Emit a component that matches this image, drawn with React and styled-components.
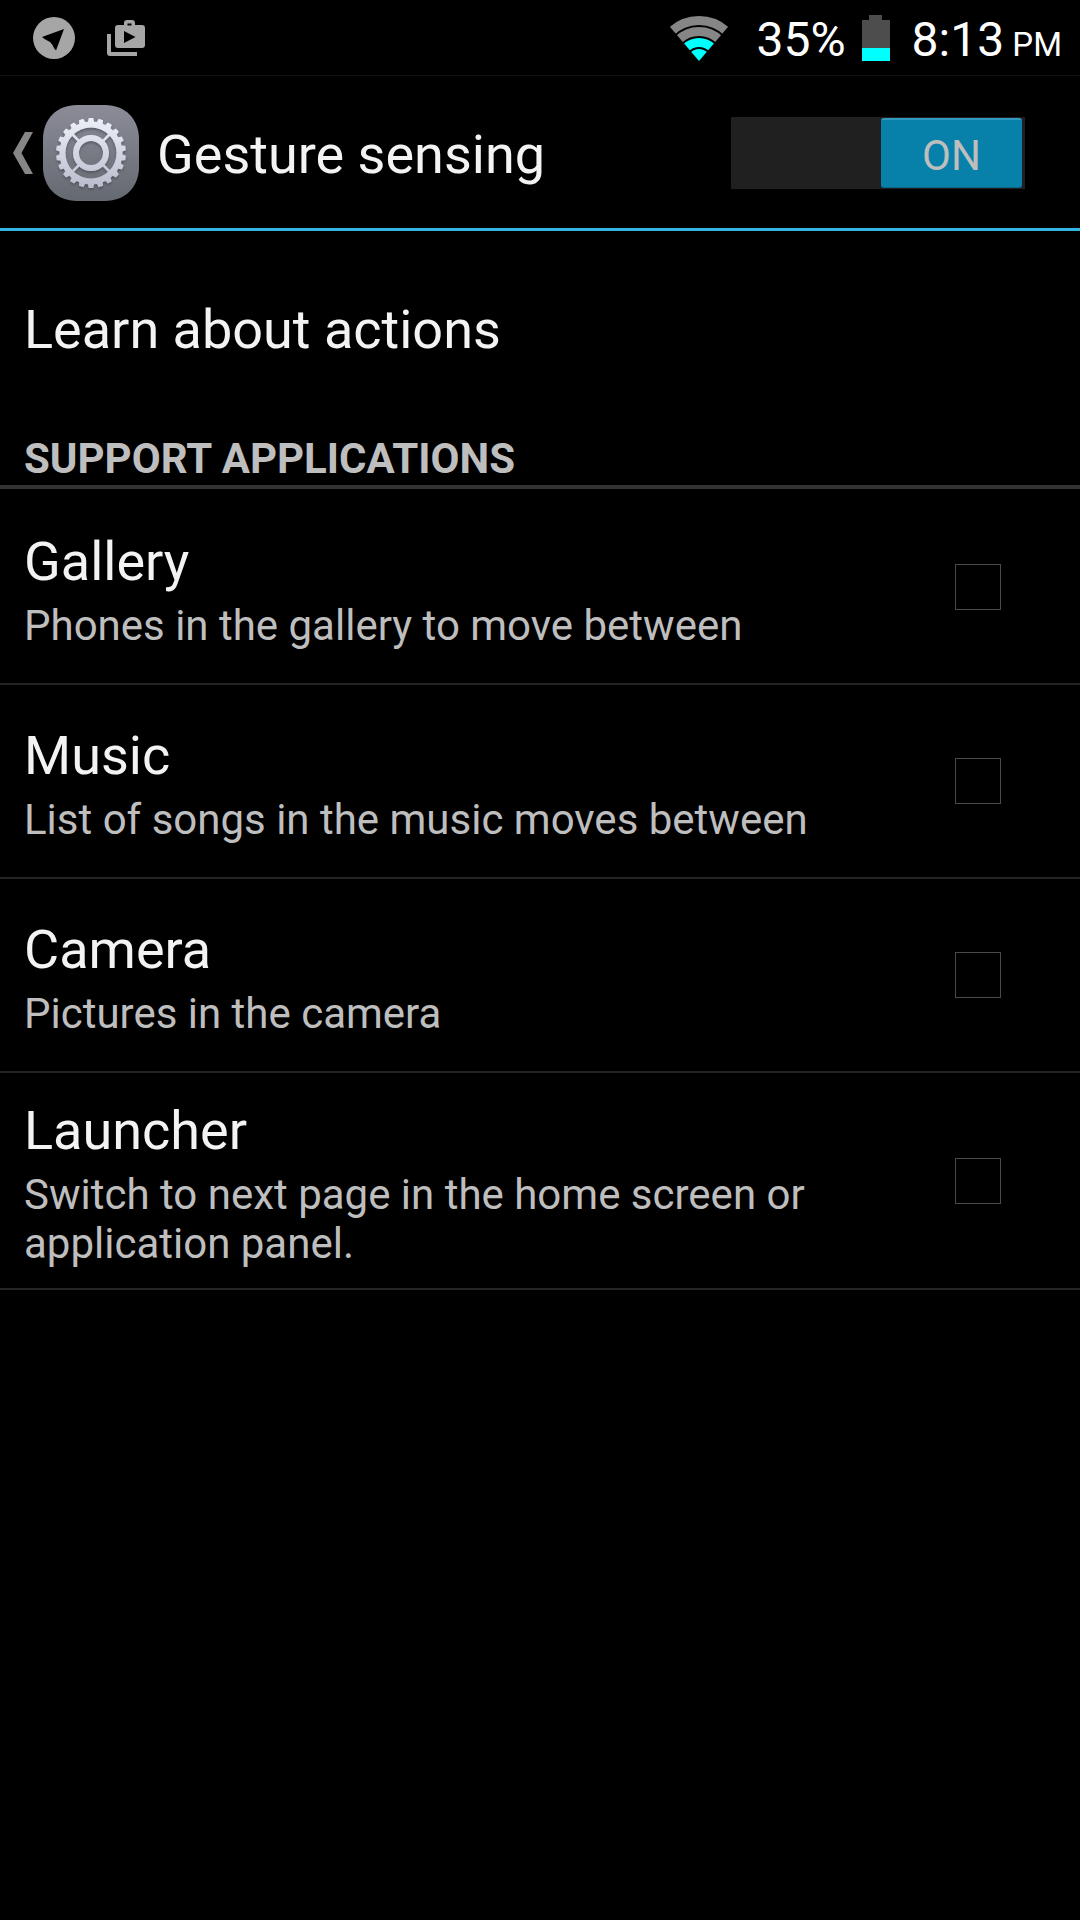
import { useState } from "react";
import styled, { createGlobalStyle } from "styled-components";

const APPS = [
  { id: "gallery", name: "Gallery", text: "Phones in the gallery to move between" },
  { id: "music", name: "Music", text: "List of songs in the music moves between" },
  { id: "camera", name: "Camera", text: "Pictures in the camera" },
  {
    id: "launcher",
    name: "Launcher",
    text: "Switch to next page in the home screen or application panel.",
  },
];

// gear outline, teeth are trapezoids between the two radii
function gearPath(teeth, inner, outer) {
  const step = (Math.PI * 2) / teeth;
  const point = (r, a) =>
    `${(48 + r * Math.sin(a)).toFixed(2)} ${(48 - r * Math.cos(a)).toFixed(2)}`;
  const points = [];
  for (let i = 0; i < teeth; i++) {
    const a = i * step;
    points.push(point(inner, a - step * 0.34));
    points.push(point(outer, a - step * 0.23));
    points.push(point(outer, a + step * 0.23));
    points.push(point(inner, a + step * 0.34));
  }
  return `M${points.join("L")}Z`;
}

function TelegramIcon() {
  return (
    <svg width="42" height="42" viewBox="0 0 42 42" aria-hidden="true">
      <circle cx="21" cy="21" r="21" fill="#a6a6a6" />
      <path d="M9 20 31 12 23 33.5Q21 32 19.500 28L17 25Q11 22 9 20Z" fill="#000" />
    </svg>
  );
}

function PlayIcon() {
  return (
    <svg width="38" height="36" viewBox="0 0 38 36" aria-hidden="true">
      <path d="M0 14H4V32H30V36H3Q0 36 0 33Z" fill="#a6a6a6" />
      <path
        fillRule="evenodd"
        fill="#a6a6a6"
        d="M11 5H17V3Q17 0 20 0H25Q28 0 28 3V5H35Q38 5 38 8V25Q38 28 35 28H11Q8 28 8 25V8Q8 5 11 5ZM20.5 3.5V5.5H24.5V3.5ZM17 11V23L28.5 17Z"
      />
    </svg>
  );
}

function WifiIcon() {
  return (
    <svg width="60" height="46" viewBox="0 0 60 46" aria-hidden="true">
      <clipPath id="wifi">
        <path d="M30 46-4 6V-10H64V6Z" />
      </clipPath>
      <g fill="none" clipPath="url(#wifi)">
        <circle cx="30" cy="46" r="40.5" stroke="#868686" strokeWidth="9" />
        <circle cx="30" cy="46" r="29.5" stroke="#868686" strokeWidth="9" />
        <circle cx="30" cy="46" r="18.5" stroke="#00ffff" strokeWidth="9" />
        <circle cx="30" cy="46" r="12" fill="#00ffff" />
      </g>
    </svg>
  );
}

function BatteryIcon() {
  return (
    <svg width="28" height="46" viewBox="0 0 28 46" aria-hidden="true">
      <path d="M7 0H20V5H28V33H0V5H7Z" fill="#4d4d4d" />
      <path d="M0 33H28V46H0Z" fill="#00ffff" />
    </svg>
  );
}

function BackIcon() {
  return (
    <svg width="20" height="42" viewBox="0 0 20 42" aria-hidden="true">
      <path d="M12 0H20L8.5 21 20 42H12L0 21Z" fill="#868686" />
    </svg>
  );
}

function SettingsIcon() {
  return (
    <svg width="96" height="96" viewBox="0 0 96 96" aria-hidden="true">
      <defs>
        <linearGradient id="tile" x1="0" y1="0" x2="0" y2="1">
          <stop offset="0" stopColor="#8b8c98" />
          <stop offset="1" stopColor="#656970" />
        </linearGradient>
        <linearGradient id="metal" gradientUnits="userSpaceOnUse" x1="0" y1="13" x2="0" y2="83">
          <stop offset="0" stopColor="#eef0f8" />
          <stop offset="1" stopColor="#b9bccd" />
        </linearGradient>
        <filter id="shadow" x="-10%" y="-10%" width="120%" height="125%">
          <feDropShadow dx="0" dy="2" stdDeviation="1" floodColor="#42454e" floodOpacity="0.6" />
        </filter>
      </defs>
      <path
        d="M34 0H62C82 0 96 14 96 34V62C96 82 82 96 62 96H34C14 96 0 82 0 62V34C0 14 14 0 34 0Z"
        fill="url(#tile)"
      />
      <g filter="url(#shadow)">
        <path
          d={`${gearPath(22, 31.5, 35)}M48 22.5A25.5 25.5 0 1 0 48 73.5 25.5 25.5 0 1 0 48 22.5Z`}
          fillRule="evenodd"
          fill="url(#metal)"
        />
        <circle cx="48" cy="48" r="15" fill="none" stroke="url(#metal)" strokeWidth="6" />
        <path
          d="M29.5 29.5 36 36M66.5 29.5 60 36M29.5 66.5 36 60M66.5 66.5 60 60"
          stroke="url(#metal)"
          strokeWidth="2.5"
        />
      </g>
    </svg>
  );
}

export default function App() {
  const [enabled, setEnabled] = useState(true);
  const [checked, setChecked] = useState({});

  function toggle(id) {
    setChecked({ ...checked, [id]: !checked[id] });
  }

  return (
    <Screen>
      <GlobalStyle />
      <StatusBar>
        <Notifications>
          <TelegramIcon />
          <PlayIcon />
        </Notifications>
        <WifiIcon />
        <Percent>35%</Percent>
        <BatteryIcon />
        <Clock>
          8:13<small> PM</small>
        </Clock>
      </StatusBar>
      <ActionBar>
        <BackButton aria-label="Navigate up">
          <BackIcon />
          <SettingsIcon />
        </BackButton>
        <Title>Gesture sensing</Title>
        <Switch
          role="switch"
          aria-checked={enabled}
          aria-label="Gesture sensing"
          $on={enabled}
          onClick={() => setEnabled(!enabled)}
        >
          <Thumb $on={enabled}>{enabled ? "ON" : "OFF"}</Thumb>
        </Switch>
      </ActionBar>
      <main>
        <LearnLink href="#actions">Learn about actions</LearnLink>
        <SectionTitle>SUPPORT APPLICATIONS</SectionTitle>
        {APPS.map((app) => (
          <Row key={app.id} htmlFor={app.id}>
            <RowText>
              <Name>{app.name}</Name>
              <Summary>{app.text}</Summary>
            </RowText>
            <Checkbox
              id={app.id}
              type="checkbox"
              checked={!!checked[app.id]}
              onChange={() => toggle(app.id)}
            />
          </Row>
        ))}
      </main>
    </Screen>
  );
}

const GlobalStyle = createGlobalStyle`
  * {
    box-sizing: border-box;
  }
  body {
    margin: 0;
    background-color: #000000;
  }
  svg {
    display: block;
    flex-shrink: 0;
  }
`;

const Screen = styled.div`
  min-height: 100vh;
  background-color: #000000;
  color: #f3f3f3;
  font-family: Roboto, sans-serif;
  font-size: 54px;
  line-height: 64px;
`;

const StatusBar = styled.header`
  display: flex;
  align-items: center;
  height: 76px;
  padding: 0 18px 0 33px;
  border-bottom: 1px solid #121212;
  color: #ffffff;
  font-size: 48px;
`;

const Notifications = styled.div`
  display: flex;
  align-items: center;
  gap: 32px;
  flex: 1;
`;

const Percent = styled.span`
  margin: 0 16px 0 28px;
  padding-top: 4px;
`;

const Clock = styled.span`
  margin-left: 22px;
  padding-top: 4px;
  small {
    font-size: 33px;
    line-height: 1;
  }
`;

const ActionBar = styled.div`
  display: flex;
  align-items: center;
  height: 155px;
  padding: 2px 55px 0 13px;
  border-bottom: 3px solid #33b5e5;
`;

const BackButton = styled.button`
  display: flex;
  align-items: center;
  gap: 10px;
  padding: 0;
  border: none;
  background: none;
`;

const Title = styled.h1`
  flex: 1;
  margin: 0 0 0 18px;
  padding-top: 4px;
  font-size: 54px;
  font-weight: 400;
`;

const Switch = styled.button`
  display: flex;
  justify-content: ${(props) => (props.$on ? "flex-end" : "flex-start")};
  width: 294px;
  height: 72px;
  padding: 1px 3px;
  border: none;
  background-color: #202020;
  font-family: inherit;
`;

const Thumb = styled.span`
  width: 141px;
  height: 70px;
  border-radius: 3px;
  border-top: 2px solid ${(props) => (props.$on ? "#2f9bc0" : "#555555")};
  border-bottom: 1px solid ${(props) => (props.$on ? "#066587" : "#333333")};
  background-color: ${(props) => (props.$on ? "#0780aa" : "#444444")};
  color: #bebebe;
  font-size: 42px;
  line-height: 72px;
  text-align: center;
`;

const LearnLink = styled.a`
  display: flex;
  align-items: center;
  min-height: 198px;
  padding: 0 24px;
  color: inherit;
  text-decoration: none;
`;

const SectionTitle = styled.h2`
  margin: 0 0 2px;
  padding: 5px 24px 2px;
  border-bottom: 4px solid #333333;
  color: #bebebe;
  font-size: 42px;
  font-weight: 700;
  line-height: 49px;
`;

const Row = styled.label`
  display: flex;
  align-items: center;
  min-height: 194px;
  padding-right: 79px;
  border-bottom: 2px solid #242424;
`;

const RowText = styled.span`
  display: flex;
  flex-direction: column;
  gap: 7px;
  flex: 1;
  padding: 26px 100px 20px 24px;
`;

const Name = styled.span`
  font-size: 54px;
`;

const Summary = styled.span`
  color: #bebebe;
  font-size: 42px;
  line-height: 49px;
`;

const Checkbox = styled.input`
  appearance: none;
  flex-shrink: 0;
  width: 46px;
  height: 46px;
  margin: 0;
  border: 1px solid #4a4a4a;
  background-color: transparent;
  &:checked {
    background-color: #33b5e5;
  }
`;
